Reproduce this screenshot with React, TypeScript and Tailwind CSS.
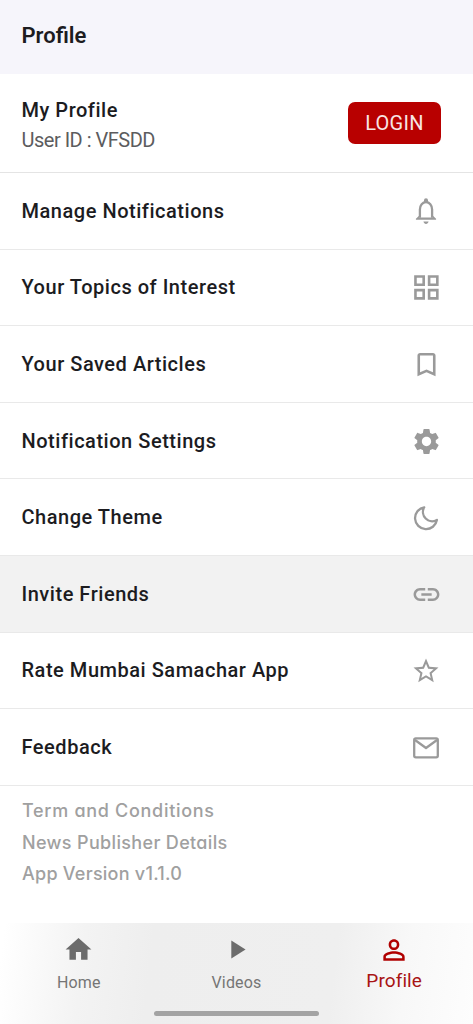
import type { ComponentType } from "react";
import {
  MdBookmarkBorder,
  MdHome,
  MdLink,
  MdPersonOutline,
  MdPlayArrow,
  MdSettings,
  MdStarBorder,
} from "react-icons/md";

type IconProps = { className?: string };

function BellIcon({ className }: IconProps) {
  return (
    <svg className={className} viewBox="0 0 28 28" fill="none" stroke="currentColor" strokeWidth="2.3">
      <path d="M7.9 20.8V12.6C7.9 8.2 10.6 5.2 14 5.2S20.1 8.2 20.1 12.6V20.8" />
      <path d="M3.900 22.800V21.700L7.100 18.800V20.600H20.900V18.800L24.100 21.700V22.800Z" fill="currentColor" stroke="none" />
      <path d="M12 5V3.200A2 2 0 0 1 16 3.200V5ZM11.400 24.500H16.600C16.200 26 15.200 26.900 14 26.900S11.800 26 11.400 24.500Z" fill="currentColor" stroke="none" />
    </svg>
  );
}

function GridIcon({ className }: IconProps) {
  return (
    <svg className={className} viewBox="0 0 24 24" fill="none" stroke="currentColor" strokeWidth="2.5">
      <path d="M1.400 1.400h7.900v7.900h-7.900ZM14.500 1.400h7.900v7.900h-7.900ZM1.400 14.500h7.900v7.900h-7.900ZM14.500 14.500h7.900v7.900h-7.900Z" />
    </svg>
  );
}

function MoonIcon({ className }: IconProps) {
  return (
    <svg className={className} viewBox="0 0 28 28" fill="none" stroke="currentColor" strokeWidth="2.3" strokeLinejoin="round">
      <path d="M12.200 3.300A11 11 0 1 0 24.900 16A9.300 9.300 0 0 1 12.200 3.300Z" />
    </svg>
  );
}

function MailIcon({ className }: IconProps) {
  return (
    <svg className={className} viewBox="0 0 28 28" fill="none" stroke="currentColor" strokeWidth="2.300" strokeLinejoin="round">
      <rect x="2.200" y="4.400" width="23.600" height="19" rx="1.600" />
      <path d="M3 6L14 14L25 6" />
    </svg>
  );
}

type Row = {
  label: string;
  icon: ComponentType<IconProps>;
  size: string;
  active?: boolean;
};

const rows: Row[] = [
  { label: "Manage Notifications", icon: BellIcon, size: "size-7" },
  { label: "Your Topics of Interest", icon: GridIcon, size: "size-[25px]" },
  { label: "Your Saved Articles", icon: MdBookmarkBorder, size: "size-[31px]" },
  { label: "Notification Settings", icon: MdSettings, size: "size-[31px]" },
  { label: "Change Theme", icon: MoonIcon, size: "size-7" },
  { label: "Invite Friends", icon: MdLink, size: "size-[31px]", active: true },
  { label: "Rate Mumbai Samachar App", icon: MdStarBorder, size: "size-[30px]" },
  { label: "Feedback", icon: MailIcon, size: "size-7" },
];

export default function App() {
  return (
    <div className="flex h-[1024px] w-full flex-col overflow-hidden bg-white font-['Roboto',sans-serif] text-[#1c1c1f]">
      <header className="flex h-[73.5px] shrink-0 items-center bg-[#f6f5fb] px-[21.5px] pb-px">
        <h1 className="text-[22px] leading-none font-semibold">Profile</h1>
      </header>

      <section className="flex h-[99.5px] shrink-0 items-center justify-between border-b border-[#e4e4e4] pt-px pr-8 pl-[21.5px]">
        <div className="flex flex-col gap-[6px] pt-1">
          <p className="text-[20px] leading-6 font-medium tracking-[0.53px]">My Profile</p>
          <p className="text-[20px] leading-6 tracking-[-0.5px] text-[#5c5c5e]">User ID : VFSDD</p>
        </div>
        <button className="h-[42px] w-[93px] rounded-[7px] bg-[#b80000] text-[20px] tracking-[0.3px] text-[#f8e4e4]">LOGIN</button>
      </section>

      <ul className="shrink-0">
        {rows.map(({ label, icon: Icon, size, active }) => (
          <li
            key={label}
            className={`flex h-[76.62px] items-center justify-between border-b border-[#e9e9e9] pr-[31px] pl-[21.5px] ${active ? "bg-[#f2f2f2]" : ""}`}
          >
            <span className="text-[20px] leading-6 font-medium tracking-[0.53px]">{label}</span>
            <span className="flex w-8 justify-center pt-px text-[#9a9a9a]">
              <Icon className={`${size} shrink-0`} />
            </span>
          </li>
        ))}
      </ul>

      <div className="flex grow flex-col pt-[9px] pl-[22px] font-['Inter',sans-serif] text-[18px] leading-[31.7px] font-medium text-[#a0a0a0] [font-feature-settings:'cv11'_1]">
        <p className="tracking-[0.7px]">Term and Conditions</p>
        <p className="tracking-[0.34px]">News Publisher Details</p>
        <p className="tracking-[0.25px]">App Version v1.1.0</p>
      </div>

      <nav className="flex h-[101px] shrink-0 flex-col items-center bg-[linear-gradient(97deg,#fff_1%,#f3f3f3_18%,#eee_32%,#efefef_70%,#f8f8f8_85%,#fdfdfd_100%)]">
        <div className="grid w-full grow grid-cols-3 text-[#757575]">
          <div className="flex flex-col items-center pt-[11px]">
            <MdHome className="size-[31px] text-[#6c6c6c]" />
            <span className="mt-[8px] text-[16px] leading-5 tracking-[0.2px]">Home</span>
          </div>
          <div className="flex flex-col items-center pt-[11px]">
            <MdPlayArrow className="size-[31px] text-[#6c6c6c]" />
            <span className="mt-[8px] text-[16px] leading-5 tracking-[0.2px]">Videos</span>
          </div>
          <div className="flex flex-col items-center pt-[11px] text-[#a81414]">
            <MdPersonOutline className="size-8 text-[#b00000]" />
            <span className="mt-[3px] text-[19px] leading-6 tracking-[0.1px]">Profile</span>
          </div>
        </div>
        <div className="mb-[8px] h-[5px] w-[165px] shrink-0 rounded-full bg-[#a3a3a3]" />
      </nav>
    </div>
  );
}
